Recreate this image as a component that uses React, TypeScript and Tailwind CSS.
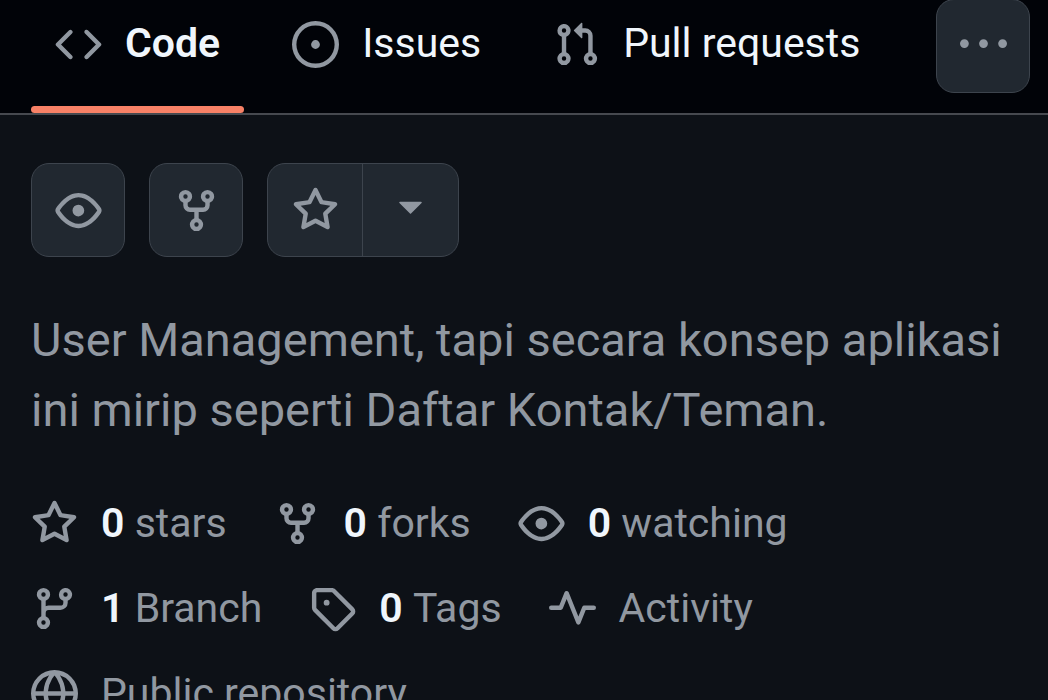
import type { ReactNode } from "react"

const icons = {
  code: "m11.28 3.22 4.25 4.25a.75.75 0 0 1 0 1.06l-4.25 4.25a.749.749 0 0 1-1.275-.326.749.749 0 0 1 .215-.734L13.94 8l-3.72-3.72a.749.749 0 0 1 .326-1.275.749.749 0 0 1 .734.215Zm-6.56 0a.751.751 0 0 1 1.042.018.751.751 0 0 1 .018 1.042L2.06 8l3.72 3.72a.749.749 0 0 1-.326 1.275.749.749 0 0 1-.734-.215L.47 8.53a.75.75 0 0 1 0-1.06Z",
  issue: "M8 9.5a1.5 1.5 0 1 0 0-3 1.5 1.5 0 0 0 0 3ZM8 0a8 8 0 1 1 0 16A8 8 0 0 1 8 0ZM1.5 8a6.5 6.5 0 1 0 13 0 6.5 6.5 0 0 0-13 0Z",
  pullRequest: "M1.5 3.25a2.25 2.25 0 1 1 3 2.122v5.256a2.251 2.251 0 1 1-1.5 0V5.372A2.25 2.25 0 0 1 1.5 3.25Zm5.677-.177L9.573.677A.25.25 0 0 1 10 .854V2.5h1A2.5 2.5 0 0 1 13.5 5v5.628a2.251 2.251 0 1 1-1.5 0V5a1 1 0 0 0-1-1h-1v1.646a.25.25 0 0 1-.427.177L7.177 3.427a.25.25 0 0 1 0-.354ZM3.75 2.5a.75.75 0 1 0 0 1.5.75.75 0 0 0 0-1.5Zm0 9.5a.75.75 0 1 0 0 1.5.75.75 0 0 0 0-1.5Zm8.25.75a.75.75 0 1 0 1.5 0 .75.75 0 0 0-1.5 0Z",
  kebab: "M8 8.5a1.5 1.5 0 1 0 0-3 1.5 1.5 0 0 0 0 3ZM1.5 8.5a1.5 1.5 0 1 0 0-3 1.5 1.5 0 0 0 0 3Zm13 0a1.5 1.5 0 1 0 0-3 1.5 1.5 0 0 0 0 3Z",
  eye: "M8 2c1.981 0 3.671.992 4.933 2.078 1.27 1.091 2.187 2.345 2.637 3.023a1.62 1.62 0 0 1 0 1.798c-.45.678-1.367 1.932-2.637 3.023C11.67 13.008 9.981 14 8 14c-1.981 0-3.671-.992-4.933-2.078C1.797 10.83.88 9.576.43 8.898a1.62 1.62 0 0 1 0-1.798c.45-.677 1.367-1.931 2.637-3.022C4.33 2.992 6.019 2 8 2ZM1.679 7.932a.12.12 0 0 0 0 .136c.411.622 1.241 1.75 2.366 2.717C5.176 11.758 6.527 12.5 8 12.5c1.473 0 2.825-.742 3.955-1.715 1.124-.967 1.954-2.096 2.366-2.717a.12.12 0 0 0 0-.136c-.412-.621-1.242-1.75-2.366-2.717C10.824 4.242 9.473 3.5 8 3.5c-1.473 0-2.825.742-3.955 1.715-1.124.967-1.954 2.096-2.366 2.717ZM8 10a2 2 0 1 1-.001-3.999A2 2 0 0 1 8 10Z",
  fork: "M5 5.372v.878c0 .414.336.75.75.75h4.5a.75.75 0 0 0 .75-.75v-.878a2.25 2.25 0 1 1 1.5 0v.878a2.25 2.25 0 0 1-2.25 2.25h-1.5v2.128a2.251 2.251 0 1 1-1.5 0V8.5h-1.5A2.25 2.25 0 0 1 3.5 6.25v-.878a2.25 2.25 0 1 1 1.5 0ZM5 3.25a.75.75 0 1 0-1.5 0 .75.75 0 0 0 1.5 0Zm6.75.75a.75.75 0 1 0 0-1.5.75.75 0 0 0 0 1.5Zm-3 8.75a.75.75 0 1 0-1.5 0 .75.75 0 0 0 1.5 0Z",
  star: "M8 .25a.75.75 0 0 1 .673.418l1.882 3.815 4.21.612a.75.75 0 0 1 .416 1.279l-3.046 2.97.719 4.192a.751.751 0 0 1-1.088.791L8 12.347l-3.766 1.98a.75.75 0 0 1-1.088-.79l.72-4.194L.818 6.374a.75.75 0 0 1 .416-1.28l4.21-.611L7.327.668A.75.75 0 0 1 8 .25Zm0 2.445L6.615 5.5a.75.75 0 0 1-.564.41l-3.097.45 2.24 2.184a.75.75 0 0 1 .216.664l-.528 3.084 2.769-1.456a.75.75 0 0 1 .698 0l2.77 1.456-.53-3.084a.75.75 0 0 1 .216-.664l2.24-2.183-3.096-.45a.75.75 0 0 1-.564-.41L8 2.694Z",
  triangleDown: "m4.227 5.427 3.596 3.596a.25.25 0 0 0 .354 0l3.596-3.596A.25.25 0 0 0 11.596 5H4.404a.25.25 0 0 0-.177.427Z",
  branch: "M9.5 3.25a2.25 2.25 0 1 1 3 2.122V6A2.5 2.5 0 0 1 10 8.5H6a1 1 0 0 0-1 1v1.128a2.251 2.251 0 1 1-1.5 0V5.372a2.25 2.25 0 1 1 1.5 0v1.836A2.493 2.493 0 0 1 6 7h4a1 1 0 0 0 1-1v-.628A2.25 2.25 0 0 1 9.5 3.25Zm-6 0a.75.75 0 1 0 1.5 0 .75.75 0 0 0-1.5 0Zm8.25-.75a.75.75 0 1 0 0 1.5.75.75 0 0 0 0-1.5ZM4.25 12a.75.75 0 1 0 0 1.5.75.75 0 0 0 0-1.5Z",
  tag: "M1 7.775V2.75C1 1.784 1.784 1 2.75 1h5.025c.464 0 .91.184 1.238.513l6.25 6.25a1.75 1.75 0 0 1 0 2.474l-5.026 5.026a1.75 1.75 0 0 1-2.474 0l-6.25-6.25A1.752 1.752 0 0 1 1 7.775Zm1.5 0c0 .066.026.13.073.177l6.25 6.25a.25.25 0 0 0 .354 0l5.025-5.025a.25.25 0 0 0 0-.354l-6.25-6.25a.25.25 0 0 0-.177-.073H2.75a.25.25 0 0 0-.25.25ZM6 5a1 1 0 1 1 0 2 1 1 0 0 1 0-2Z",
  pulse: "M6 2c.306 0 .582.187.696.471L10 10.731l1.304-3.26A.751.751 0 0 1 12 7h3.25a.75.75 0 0 1 0 1.5h-2.742l-1.812 4.528a.751.751 0 0 1-1.392 0L6 4.77 4.696 8.03A.75.75 0 0 1 4 8.5H.75a.75.75 0 0 1 0-1.5h2.742l1.812-4.529A.751.751 0 0 1 6 2Z",
  globe: "M8 0a8 8 0 1 1 0 16A8 8 0 0 1 8 0ZM5.78 8.75a9.64 9.64 0 0 0 1.363 4.177c.255.426.542.832.857 1.215.245-.296.551-.705.857-1.215A9.64 9.64 0 0 0 10.22 8.75Zm4.44-1.5a9.64 9.64 0 0 0-1.363-4.177c-.307-.51-.612-.919-.857-1.215a9.927 9.927 0 0 0-.857 1.215A9.64 9.64 0 0 0 5.78 7.25Zm-5.944 1.5H1.543a6.507 6.507 0 0 0 4.666 5.5c-.123-.181-.24-.365-.352-.552-.715-1.192-1.437-2.874-1.581-4.948Zm-2.733-1.5h2.733c.144-2.074.866-3.756 1.58-4.948.12-.197.237-.381.353-.552a6.507 6.507 0 0 0-4.666 5.5Zm10.181 1.5c-.144 2.074-.866 3.756-1.58 4.948-.12.197-.237.381-.353.552a6.507 6.507 0 0 0 4.666-5.5Zm2.733-1.5a6.507 6.507 0 0 0-4.666-5.5c.123.181.24.365.353.552.714 1.192 1.436 2.874 1.58 4.948Z",
}

type IconName = keyof typeof icons

const Icon = ({ name }: { name: IconName }) => (
  <svg viewBox="0 0 16 16" className="size-[47px] shrink-0 fill-[#9198a1]" aria-hidden="true">
    <path fillRule="evenodd" d={icons[name]} />
  </svg>
)

const tabs: { label: string; icon: IconName; active?: boolean }[] = [
  { label: "Code", icon: "code", active: true },
  { label: "Issues", icon: "issue" },
  { label: "Pull requests", icon: "pullRequest" },
]

const stats: { icon: IconName; count?: number; label: string }[] = [
  { icon: "star", count: 0, label: "stars" },
  { icon: "fork", count: 0, label: "forks" },
  { icon: "eye", count: 0, label: "watching" },
  { icon: "branch", count: 1, label: "Branch" },
  { icon: "tag", count: 0, label: "Tags" },
  { icon: "pulse", label: "Activity" },
  { icon: "globe", label: "Public repository" },
]

const IconButton = ({ label, children }: { label: string; children: ReactNode }) => (
  <button
    type="button"
    aria-label={label}
    className="flex size-[94px] shrink-0 items-center justify-center rounded-[18px] border border-[#3d444d] bg-[#212830]"
  >
    {children}
  </button>
)

const RepoNav = () => (
  <header className="-mt-px flex items-start justify-between border-b-2 border-[#46494f] bg-[#010308] pr-[18px] pl-[31px]">
    <nav className="flex gap-6" aria-label="Repository">
      {tabs.map((tab) => (
        <a
          key={tab.label}
          href="#"
          aria-current={tab.active ? "page" : undefined}
          className="flex flex-col whitespace-nowrap text-[41px] text-[#f0f6fc]"
        >
          <span className="flex h-[107px] items-center gap-[23px] px-6 pb-[17px]">
            <Icon name={tab.icon} />
            <span className={tab.active ? "font-semibold" : ""}>{tab.label}</span>
          </span>
          <span className={tab.active ? "h-[7px] rounded-full bg-[#f78166]" : "h-[7px]"} />
        </a>
      ))}
    </nav>
    <IconButton label="More items">
      <Icon name="kebab" />
    </IconButton>
  </header>
)

export default function App() {
  return (
    <div className="min-h-screen overflow-hidden bg-[#0d1117] font-[Roboto,sans-serif] text-[#9198a1]">
      <RepoNav />
      <main className="px-[31px] pt-12 pb-6">
        <div className="flex gap-6">
          <IconButton label="Watch">
            <Icon name="eye" />
          </IconButton>
          <IconButton label="Fork">
            <Icon name="fork" />
          </IconButton>
          <div className="flex h-[94px] divide-x divide-[#3d444d] rounded-[18px] border border-[#3d444d] bg-[#212830]">
            <button type="button" aria-label="Star" className="flex w-[95px] items-center justify-center">
              <Icon name="star" />
            </button>
            <button type="button" aria-label="Add to list" className="flex w-[95px] items-center justify-center">
              <Icon name="triangleDown" />
            </button>
          </div>
        </div>

        <p className="mt-12 text-[47px] leading-[70px]">
          User Management, tapi secara konsep aplikasi ini mirip seperti Daftar Kontak/Teman.
        </p>

        <ul className="mt-12 flex flex-wrap gap-x-[47px] gap-y-6 text-[41px] leading-[61px]">
          {stats.map((stat) => (
            <li key={stat.label}>
              <a href="#" className="flex items-center gap-[23px] whitespace-nowrap">
                <Icon name={stat.icon} />
                <span>
                  {stat.count !== undefined && (
                    <strong className="font-semibold text-[#f0f6fc]">{stat.count} </strong>
                  )}
                  {stat.label}
                </span>
              </a>
            </li>
          ))}
        </ul>
      </main>
    </div>
  )
}
